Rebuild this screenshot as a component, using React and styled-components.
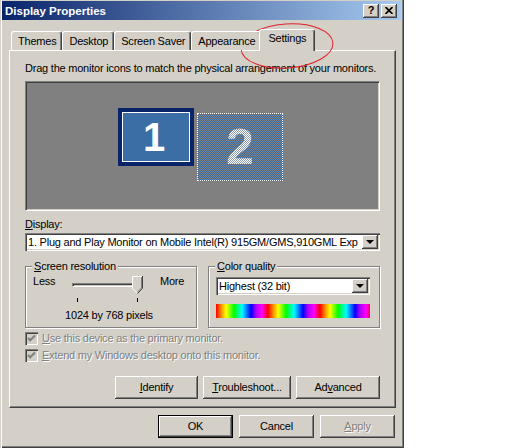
import React from "react";
import styled, { createGlobalStyle } from "styled-components";

const GlobalStyle = createGlobalStyle`
  html, body {
    margin: 0;
    padding: 0;
    background: #fff;
  }
  body {
    font-family: "Liberation Sans", Arial, sans-serif;
    font-size: 11px;
    letter-spacing: -0.22px;
    color: #000;
  }
`;

const raised = `
  box-shadow: inset -1px -1px #404040, inset 1px 1px #fff,
    inset -2px -2px #808080, inset 2px 2px #d4d0c8;
`;

const sunken = `
  box-shadow: inset 1px 1px #808080, inset 2px 2px #404040,
    inset -1px -1px #fff, inset -2px -2px #d4d0c8;
`;

const Window = styled.div`
  position: relative;
  box-sizing: border-box;
  width: 404px;
  height: 448px;
  padding: 1px 3px 3px 2px;
  background: #d4d0c8;
  box-shadow: inset 1px 0 #d4d0c8, inset 2px 0 #fff, inset -1px -1px #404040,
    inset -2px -2px #808080;
  display: flex;
  flex-direction: column;
`;

const TitleBar = styled.div`
  height: 19px;
  display: flex;
  align-items: center;
  justify-content: space-between;
  padding: 0 4px 0 3px;
  background: linear-gradient(to right, #0a246a, #a6caf0);
`;

const Title = styled.span`
  color: #fff;
  font-weight: bold;
  font-size: 11.5px;
  letter-spacing: 0;
`;

const TitleButtons = styled.div`
  display: flex;
  gap: 2px;
`;

const TitleButton = styled.div`
  box-sizing: border-box;
  width: 16px;
  height: 14px;
  background: #d4d0c8;
  ${raised}
  display: flex;
  align-items: center;
  justify-content: center;
  font-weight: bold;
  font-size: 11px;
  line-height: 1;
`;

const Body = styled.div`
  flex: 1;
  display: flex;
  flex-direction: column;
  padding: 9px 5px 0 7px;
`;

const TabStrip = styled.div`
  display: flex;
  align-items: flex-end;
  height: 22px;
  padding-left: 2px;
  margin-bottom: -1px;
  position: relative;
  z-index: 1;
`;

const Tab = styled.div`
  box-sizing: border-box;
  height: ${(p) => (p.$active ? 22 : 19)}px;
  margin: 0 ${(p) => (p.$active ? -2 : 0)}px ${(p) => (p.$active ? 0 : 1)}px;
  padding: ${(p) => (p.$active ? "2px 8px 0 8px" : "3px 5px 0 6px")};
  line-height: 13px;
  background: #d4d0c8;
  border-top: 1px solid #fff;
  border-left: 1px solid #fff;
  border-right: 1px solid #404040;
  border-radius: 3px 3px 0 0;
  box-shadow: inset -1px 0 #808080;
  position: relative;
  z-index: ${(p) => (p.$active ? 2 : 1)};
  white-space: nowrap;
`;

const Panel = styled.div`
  box-sizing: border-box;
  height: 358px;
  padding: 11px 15px 0 15px;
  border-top: 1px solid #fff;
  border-left: 1px solid #fff;
  border-right: 1px solid #404040;
  border-bottom: 1px solid #404040;
  box-shadow: inset -1px -1px #808080;
  display: flex;
  flex-direction: column;
`;

const Text = styled.div`
  line-height: 13px;
  white-space: nowrap;
`;

const Arrangement = styled.div`
  position: relative;
  box-sizing: border-box;
  height: 130px;
  margin-top: 6px;
  background: #808080;
  border: 1px solid;
  border-color: #808080 #fff #fff #808080;
  box-shadow: inset 1px 1px #404040, inset -1px -1px #d4d0c8;
`;

const PrimaryMonitor = styled.div`
  position: absolute;
  left: 92px;
  top: 26px;
  box-sizing: border-box;
  width: 76px;
  height: 58px;
  padding: 4px;
  background: #0a246a;
`;

const MonitorFace = styled.div`
  box-sizing: border-box;
  height: 100%;
  border: 1px solid #fff;
  background: #3a6ea5;
  display: flex;
  align-items: center;
  justify-content: center;
  color: #fff;
  font-weight: bold;
  font-size: 40px;
  letter-spacing: 0;
  padding-right: 4px;
`;

const SecondMonitor = styled.div`
  position: absolute;
  left: 171px;
  top: 31px;
  box-sizing: border-box;
  width: 86px;
  height: 68px;
  border: 1px dotted #fff;
  background: repeating-conic-gradient(#3a6ea5 0 25%, #808080 0 50%) 0 0 / 2px 2px;
  display: flex;
  align-items: center;
  justify-content: center;
  font-weight: bold;
  font-size: 50px;
  letter-spacing: 0;
`;

const DitherDigit = styled.span`
  background: repeating-conic-gradient(#fff 0 25%, #8a9cb4 0 50%) 0 0 / 2px 2px;
  -webkit-background-clip: text;
  background-clip: text;
  color: transparent;
  line-height: 1;
`;

const FieldLabel = styled(Text)`
  margin-top: 7px;
`;

const Combo = styled.div`
  box-sizing: border-box;
  display: flex;
  height: 18px;
  padding: 2px;
  margin-top: ${(p) => p.$top || 0}px;
  background: #fff;
  ${sunken}
`;

const ComboText = styled.div`
  flex: 1;
  overflow: hidden;
  white-space: nowrap;
  padding-left: 1px;
  line-height: 14px;
`;

const ComboButton = styled.div`
  box-sizing: border-box;
  width: 16px;
  background: #d4d0c8;
  ${raised}
  display: flex;
  align-items: center;
  justify-content: center;
  &::after {
    content: "";
    border-left: 4px solid transparent;
    border-right: 4px solid transparent;
    border-top: 4px solid #000;
    margin-left: -1px;
  }
`;

const Groups = styled.div`
  display: flex;
  gap: 11px;
  margin-top: 15px;
`;

const Group = styled.div`
  position: relative;
  box-sizing: border-box;
  width: ${(p) => p.$width || "auto"};
  flex: ${(p) => (p.$width ? "none" : 1)};
  height: 62px;
  border: 1px solid #808080;
  box-shadow: inset 1px 1px #fff, 1px 1px #fff;
  padding: ${(p) => p.$pad};
`;

const GroupLabel = styled.span`
  position: absolute;
  top: -7px;
  left: 6px;
  padding: 0 2px;
  line-height: 13px;
  background: #d4d0c8;
`;

const SliderRow = styled.div`
  display: flex;
  padding-left: 7px;
`;

const SliderEnd = styled(Text)`
  width: ${(p) => p.$width};
  margin-left: ${(p) => p.$left || 0}px;
`;

const Slider = styled.div`
  position: relative;
  width: 71px;
  height: 28px;
`;

const Track = styled.div`
  box-sizing: border-box;
  height: 4px;
  margin-top: 8px;
  border: 1px solid;
  border-color: #808080 #fff #fff #808080;
  box-shadow: inset 1px 1px #404040;
`;

const Thumb = styled.svg`
  position: absolute;
  left: 60px;
  top: 1px;
`;

const Ticks = styled.div`
  display: flex;
  justify-content: space-between;
  padding: 0 5px;
  margin-top: 11px;
`;

const Tick = styled.div`
  width: 1px;
  height: 4px;
  background: #000;
`;

const Caption = styled(Text)`
  margin-top: 6px;
  text-align: center;
  padding-right: 4px;
`;

const Rainbow = styled.div`
  height: 14px;
  margin-top: 9px;
  background: repeating-linear-gradient(
    to right,
    #f00 0,
    #f80 5px,
    #ff0 10px,
    #0f0 18px,
    #0ff 26px,
    #00f 35px,
    #a0f 40px,
    #f0f 46px,
    #f00 52px
  );
`;

const CheckRow = styled.div`
  display: flex;
  align-items: center;
  gap: 4px;
  height: 13px;
  margin-top: ${(p) => p.$top}px;
`;

const CheckBox = styled.div`
  box-sizing: border-box;
  width: 13px;
  height: 13px;
  background: #d4d0c8;
  ${sunken}
  display: flex;
  align-items: center;
  justify-content: center;
`;

const Disabled = styled.span`
  color: #808080;
  text-shadow: 1px 1px #fff;
  line-height: 13px;
  white-space: nowrap;
`;

const ButtonRow = styled.div`
  display: flex;
  justify-content: flex-end;
  gap: ${(p) => p.$gap}px;
  margin-top: ${(p) => p.$top}px;
  padding-right: ${(p) => p.$right || 0}px;
`;

const Button = styled.div`
  box-sizing: border-box;
  width: ${(p) => p.$width}px;
  height: 23px;
  background: #d4d0c8;
  ${raised}
  border: ${(p) => (p.$default ? "1px solid #000" : "none")};
  display: flex;
  align-items: center;
  justify-content: center;
  line-height: 13px;
  color: ${(p) => (p.$disabled ? "#808080" : "#000")};
  text-shadow: ${(p) => (p.$disabled ? "1px 1px #fff" : "none")};
`;

const Annotation = styled.svg`
  position: absolute;
  left: 238px;
  top: 21px;
  pointer-events: none;
`;

const Check = () => (
  <svg width="9" height="9" viewBox="0 0 9 9">
    <path d="M1 4 L3.2 6.3 L8 1.5" stroke="#808080" strokeWidth="2" fill="none" />
  </svg>
);

export default function App() {
  return (
    <>
      <GlobalStyle />
      <Window>
        <TitleBar>
          <Title>Display Properties</Title>
          <TitleButtons>
            <TitleButton>?</TitleButton>
            <TitleButton>
              <svg width="8" height="7" viewBox="0 0 8 7">
                <path d="M0.5 0 L7.5 7 M7.5 0 L0.5 7" stroke="#000" strokeWidth="1.6" />
              </svg>
            </TitleButton>
          </TitleButtons>
        </TitleBar>
        <Body>
          <TabStrip>
            <Tab>Themes</Tab>
            <Tab>Desktop</Tab>
            <Tab>Screen Saver</Tab>
            <Tab>Appearance</Tab>
            <Tab $active>Settings</Tab>
          </TabStrip>
          <Panel>
            <Text>Drag the monitor icons to match the physical arrangement of your monitors.</Text>
            <Arrangement>
              <PrimaryMonitor>
                <MonitorFace>1</MonitorFace>
              </PrimaryMonitor>
              <SecondMonitor>
                <DitherDigit>2</DitherDigit>
              </SecondMonitor>
            </Arrangement>
            <FieldLabel>
              <u>D</u>isplay:
            </FieldLabel>
            <Combo $top={2}>
              <ComboText>1. Plug and Play Monitor on Mobile Intel(R) 915GM/GMS,910GML Exp</ComboText>
              <ComboButton />
            </Combo>
            <Groups>
              <Group $width="172px" $pad="8px 0 0 0">
                <GroupLabel>
                  <u>S</u>creen resolution
                </GroupLabel>
                <SliderRow>
                  <SliderEnd $width="39px">Less</SliderEnd>
                  <Slider>
                    <Track />
                    <Thumb width="11" height="18" viewBox="0 0 11 18">
                      <polygon points="0,0 11,0 11,12 5.5,17.5 0,12" fill="#d4d0c8" />
                      <polyline points="0.5,12.5 0.5,0.5 10,0.5" stroke="#fff" fill="none" />
                      <line x1="0.5" y1="12.5" x2="5" y2="17" stroke="#fff" />
                      <polyline points="10.5,0 10.5,12.2 5.5,17.5" stroke="#404040" fill="none" />
                      <polyline points="9.5,1 9.5,11.8 5.5,16" stroke="#808080" fill="none" />
                    </Thumb>
                    <Ticks>
                      <Tick />
                      <Tick />
                    </Ticks>
                  </Slider>
                  <SliderEnd $width="auto" $left={17}>
                    More
                  </SliderEnd>
                </SliderRow>
                <Caption>1024 by 768 pixels</Caption>
              </Group>
              <Group $pad="10px 9px 0 7px">
                <GroupLabel>
                  <u>C</u>olor quality
                </GroupLabel>
                <Combo>
                  <ComboText>Highest (32 bit)</ComboText>
                  <ComboButton />
                </Combo>
                <Rainbow />
              </Group>
            </Groups>
            <CheckRow $top={4}>
              <CheckBox>
                <Check />
              </CheckBox>
              <Disabled>
                <u>U</u>se this device as the primary monitor.
              </Disabled>
            </CheckRow>
            <CheckRow $top={4}>
              <CheckBox>
                <Check />
              </CheckBox>
              <Disabled>
                <u>E</u>xtend my Windows desktop onto this monitor.
              </Disabled>
            </CheckRow>
            <ButtonRow $gap={5} $top={14}>
              <Button $width={83}>
                <span>
                  <u>I</u>dentify
                </span>
              </Button>
              <Button $width={88}>
                <span>
                  <u>T</u>roubleshoot...
                </span>
              </Button>
              <Button $width={84}>
                <span>
                  Ad<u>v</u>anced
                </span>
              </Button>
            </ButtonRow>
          </Panel>
          <ButtonRow $gap={6} $top={7} $right={1}>
            <Button $width={75} $default>
              OK
            </Button>
            <Button $width={75}>Cancel</Button>
            <Button $width={75} $disabled>
              <span>
                <u>A</u>pply
              </span>
            </Button>
          </ButtonRow>
        </Body>
        <Annotation width="100" height="50" viewBox="0 0 100 50">
          <ellipse cx="49" cy="25" rx="46" ry="22" fill="none" stroke="#e0202a" strokeWidth="1" transform="rotate(-4 49 25)" />
        </Annotation>
      </Window>
    </>
  );
}
